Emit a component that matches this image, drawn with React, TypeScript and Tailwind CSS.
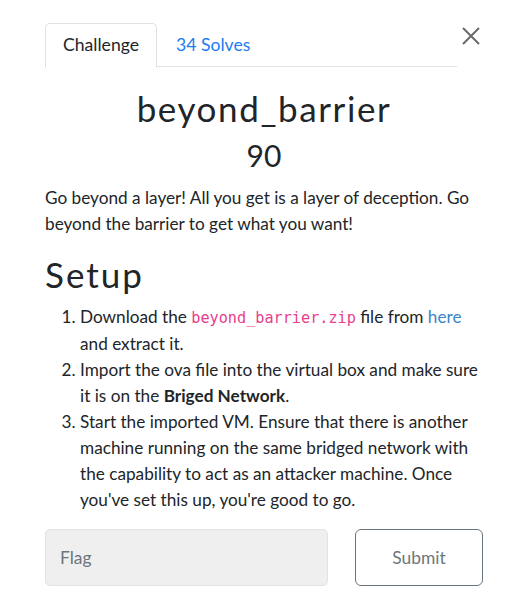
import React from "react";

export default function App() {
  return (
    <div
      className="w-[530px] h-[609px] bg-white text-[#212529] overflow-hidden"
      style={{ fontFamily: "Lato, 'Noto Sans', sans-serif" }}
    >
      <div className="pl-[45px] pr-[47px] pt-[23px]">
        <div className="flex items-start">
          <div className="flex w-[412px] border-b border-[#dee2e6] h-[44px]">
            <div className="h-[45px] px-[17px] flex items-center border border-[#dee2e6] border-b-white rounded-t-[5px] bg-white text-[17.6px] text-[#212529]">
              Challenge
            </div>
            <div className="h-[44px] px-[19px] flex items-center text-[17.6px] text-[#1a7cf5]">
              34 Solves
            </div>
          </div>
          <div className="flex-1 flex justify-end pt-[4px] pr-[3px]">
            <svg width="18" height="18" viewBox="0 0 18 18">
              <path d="M1 1 L17 17 M17 1 L1 17" stroke="#6a6a6a" strokeWidth="2" />
            </svg>
          </div>
        </div>

        <h2 className="text-center text-[35px] tracking-[1.6px] leading-[44px] mt-[19px]">
          beyond_barrier
        </h2>
        <h3 className="text-center text-[30px] leading-[36px] mt-[7px]">90</h3>

        <p className="text-[17.2px] leading-[26px] mt-[12px]">
          Go beyond a layer! All you get is a layer of deception. Go beyond the barrier to get what you want!
        </p>

        <h1 className="text-[35px] tracking-[2px] leading-[42px] mt-[16px]">Setup</h1>

        <ol className="list-decimal pl-[35px] text-[17.2px] leading-[26px] mt-[9px]">
          <li>
            Download the{" "}
            <code
              className="text-[#e83e8c] text-[15.2px]"
              style={{ fontFamily: "'DejaVu Sans Mono', 'Liberation Mono', monospace" }}
            >
              beyond_barrier.zip
            </code>{" "}
            file from <span className="text-[#3d85c6]">here</span> and extract it.
          </li>
          <li>
            Import the ova file into the virtual box and make sure it is on the{" "}
            <b className="font-bold">Briged Network</b>.
          </li>
          <li>
            Start the imported VM. Ensure that there is another machine running on the same bridged network with the
            capability to act as an attacker machine. Once you've set this up, you're good to go.
          </li>
        </ol>

        <div className="flex mt-[16px] gap-[27px]">
          <div className="w-[283px] h-[57px] bg-[#efefef] border border-[#e3e3e3] rounded-[5px] flex items-center pl-[14px] pt-[2px] text-[17.4px] text-[#6c757d]">
            Flag
          </div>
          <div className="w-[128px] h-[57px] bg-white border border-[#6c757d] rounded-[6px] flex items-center justify-center pt-[2px] text-[17.4px] text-[#6c757d]">
            Submit
          </div>
        </div>
      </div>
    </div>
  );
}
